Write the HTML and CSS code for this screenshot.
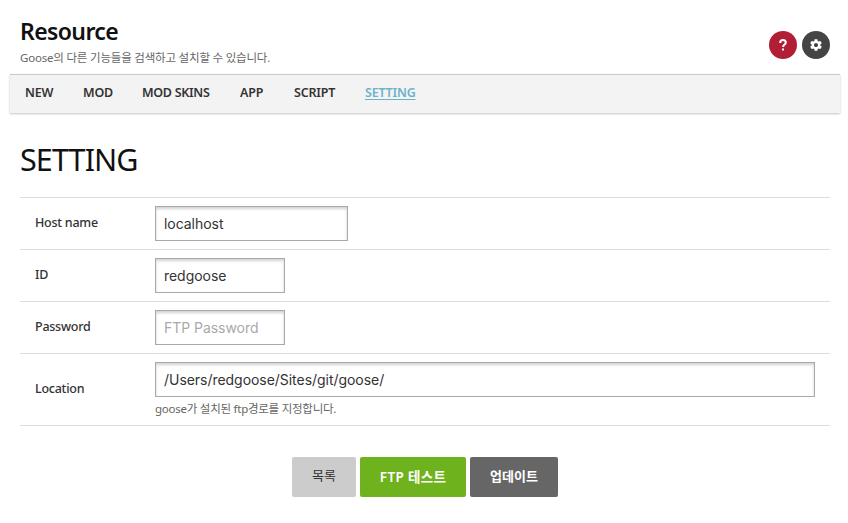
FILE: index.html
```html
<!DOCTYPE html>
<html lang="ko">
<head>
<meta charset="utf-8">
<title>Resource</title>
<link rel="stylesheet" href="styles.css">
</head>
<body>
<header class="header">
  <div class="heading">
    <h1>Resource</h1>
    <p>Goose의 다른 기능들을 검색하고 설치할 수 있습니다.</p>
  </div>
  <div class="actions">
    <a class="round help" aria-label="Help"><svg viewBox="0 0 28 28"><path d="M11.2 12.1V11.5Q11.2 9 14 9T16.8 11.5Q16.8 12.6 15.6 13.5Q14.1 14.6 14.1 16.1" fill="none" stroke="#fff" stroke-width="2"/><path d="M13 17.6h2v2h-2z" fill="#fff"/></svg></a>
    <a class="round config" aria-label="Settings"><svg viewBox="0 0 28 28"><path fill="#fff" transform="translate(7 7) scale(.5833)" d="M19.43 12.98c.04-.32.07-.64.07-.98s-.03-.66-.07-.98l2.11-1.65c.19-.15.24-.42.12-.64l-2-3.46c-.12-.22-.39-.3-.61-.22l-2.49 1c-.52-.4-1.08-.73-1.69-.98l-.38-2.65C14.46 2.18 14.25 2 14 2h-4c-.25 0-.46.18-.49.42l-.38 2.65c-.61.25-1.17.59-1.69.98l-2.49-1c-.23-.09-.49 0-.61.22l-2 3.46c-.13.22-.07.49.12.64l2.11 1.65c-.04.32-.07.65-.07.98s.03.66.07.98l-2.11 1.65c-.19.15-.24.42-.12.64l2 3.46c.12.22.39.3.61.22l2.49-1c.52.4 1.08.73 1.69.98l.38 2.65c.03.24.24.42.49.42h4c.25 0 .46-.18.49-.42l.38-2.65c.61-.25 1.17-.59 1.69-.98l2.49 1c.23.09.49 0 .61-.22l2-3.46c.12-.22.07-.49-.12-.64l-2.11-1.65zM12 15.5c-1.93 0-3.5-1.57-3.5-3.5s1.57-3.5 3.5-3.5 3.5 1.57 3.5 3.5-1.57 3.5-3.5 3.5z"/></svg></a>
  </div>
</header>
<nav class="nav">
  <a class="w-new">NEW</a><a class="w-mod">MOD</a><a class="w-skins">MOD SKINS</a><a class="w-app">APP</a><a class="w-script">SCRIPT</a><a class="active">SETTING</a>
</nav>
<main class="content">
  <h2>SETTING</h2>
  <form>
    <div class="row"><label for="host">Host name</label><div class="field"><input id="host" class="host" type="text" value="localhost"></div></div>
    <div class="row"><label for="user">ID</label><div class="field"><input id="user" class="short" type="text" value="redgoose"></div></div>
    <div class="row"><label for="pass">Password</label><div class="field"><input id="pass" class="short" type="password" placeholder="FTP Password"></div></div>
    <div class="row"><label for="loc">Location</label><div class="field"><input id="loc" class="wide" type="text" value="/Users/redgoose/Sites/git/goose/"><p class="hint">goose가 설치된 ftp경로를 지정합니다.</p></div></div>
    <div class="buttons">
      <button type="button" class="list">목록</button>
      <button type="button" class="test">FTP 테스트</button>
      <button type="button" class="update">업데이트</button>
    </div>
  </form>
</main>
</body>
</html>
```
FILE: styles.css
```css
* { box-sizing: border-box; }
body {
  margin: 0;
  background: #fff;
  color: #333;
  font-family: "Noto Sans", "Noto Sans CJK KR", sans-serif;
  font-size: 12px;
}
h1, h2, p { margin: 0; }
.header {
  display: flex;
  justify-content: space-between;
  width: 810px;
  height: 74px;
  margin-left: 20px;
  padding-top: 17px;
}
h1 { color: #111; font-size: 23px; line-height: 28px; font-weight: 600; letter-spacing: -.6px; }
.heading p { margin-top: 4px; color: #666; font-size: 11.5px; line-height: 18px; letter-spacing: -.2px; white-space: nowrap; }
.actions { display: flex; gap: 5px; margin-top: 14px; }
.round { width: 28px; height: 28px; border-radius: 50%; }
.round svg { display: block; }
.help { background: #b31e37; }
.config { background: #444; }
.nav {
  display: flex;
  gap: 30px;
  width: 830px;
  height: 39px;
  margin-left: 10px;
  padding-left: 15px;
  border-top: 1px solid #c9c9c9;
  background: #f3f3f3;
  box-shadow: 0 1px 2px rgba(0, 0, 0, .24);
}
.nav a { color: #333; font-size: 12.5px; font-weight: 600; line-height: 36px; letter-spacing: -.2px; white-space: nowrap; }
.nav .w-new { width: 28px; }
.nav .w-mod { width: 29px; }
.nav .w-skins { width: 68px; letter-spacing: -.3px; }
.nav .w-app { width: 24px; }
.nav .w-script { width: 41px; }
.nav .active { color: #6eb1cb; text-decoration: underline; text-underline-offset: 2px; }
.content { width: 810px; margin-left: 20px; }
h2 { height: 84px; padding-top: 26px; color: #111; font-size: 30.5px; line-height: 40px; font-weight: 400; letter-spacing: -.9px; }
.row { display: flex; border-top: 1px solid #ddd; padding: 8px 15px; }
.row label { width: 120px; padding-bottom: 2px; line-height: 33px; font-weight: 500; font-size: 12.5px; letter-spacing: -.25px; align-self: center; }
.field { height: 35px; }
.row:nth-child(4) { height: 73px; border-bottom: 1px solid #ddd; }
.row:nth-child(4) .field { height: 55px; }
input {
  display: block;
  height: 35px;
  padding: 0 8px 1px;
  border: 1px solid #a9a9a9;
  border-radius: 0;
  background: #fff;
  box-shadow: inset 0 2px 3px rgba(0, 0, 0, .18);
  color: #333;
  font: 14px Inter, sans-serif;
  letter-spacing: -.04px;
  outline: 0;
}
input::placeholder { color: #a9a9a9; opacity: 1; }
.host { width: 193px; }
.short { width: 130px; }
.wide { width: 660px; }
.hint { margin-top: 3px; color: #666; font-size: 11.5px; line-height: 18px; letter-spacing: -.25px; white-space: nowrap; }
.buttons { display: flex; gap: 4px; padding: 31px 0 0 272px; }
button {
  height: 40px;
  padding: 0 0 3px;
  border: 0;
  border-radius: 2px;
  color: #fff;
  font: 600 13px "Noto Sans", "Noto Sans CJK KR", sans-serif;
}
.list { width: 64px; padding-bottom: 5px; background: #ccc; color: #333; font-weight: 400; }
.test { width: 106px; background: #6eb21e; font-size: 13.5px; letter-spacing: .35px; }
.update { width: 88px; background: #666; }
```
